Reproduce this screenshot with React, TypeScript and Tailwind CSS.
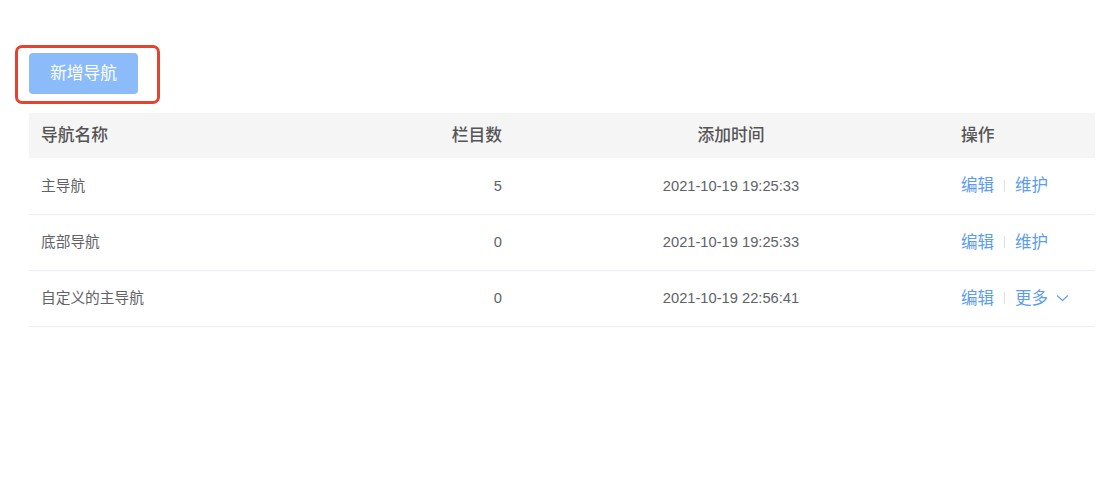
const rows = [
  { name: "主导航", count: 5, time: "2021-10-19 19:25:33", more: false },
  { name: "底部导航", count: 0, time: "2021-10-19 19:25:33", more: false },
  { name: "自定义的主导航", count: 0, time: "2021-10-19 22:56:41", more: true },
];

export default function App() {
  return (
    <div
      className="min-h-[501px] w-[1120px] bg-white"
      style={{ fontFamily: '"Liberation Sans", "Noto Sans CJK SC", sans-serif' }}
    >
      <div className="pt-[45px]">
        <div className="ml-[15px] inline-flex rounded-[7px] border-[3px] border-[#e5432f] pb-[7px] pl-[11px] pr-[19px] pt-[5px]">
          <button className="flex h-[41px] w-[109px] items-center justify-center rounded-[4px] bg-[#8bbbf9] pt-px text-[16.8px] text-white">
            新增导航
          </button>
        </div>
      </div>

      <div className="ml-[29px] mt-[9px] w-[1066px]">
        <table className="w-full table-fixed border-collapse">
          <colgroup>
            <col className="w-[300px]" />
            <col className="w-[185px]" />
            <col className="w-[434px]" />
            <col className="w-[147px]" />
          </colgroup>
          <thead>
            <tr className="h-[45px] bg-[#f5f5f5] text-[16.8px] text-[#555]">
              <th className="px-3 text-left font-medium">导航名称</th>
              <th className="px-3 text-right font-medium">栏目数</th>
              <th className="px-3 text-center font-medium">添加时间</th>
              <th className="px-[13px] text-left font-medium">操作</th>
            </tr>
          </thead>
          <tbody>
            {rows.map((row) => (
              <tr key={row.name} className="h-[56px] border-b border-[#ebeef5] text-[14.7px] text-[#606266]">
                <td className="px-3">{row.name}</td>
                <td className="px-3 text-right">{row.count}</td>
                <td className="px-3 text-center">{row.time}</td>
                <td className="px-[13px]">
                  <div className="flex items-center text-[16.5px] text-[#5b9cf1]">
                    <span>编辑</span>
                    <span className="mx-[10px] h-[12px] w-px bg-[#dcdfe6]" />
                    <span>{row.more ? "更多" : "维护"}</span>
                    {row.more && (
                      <svg className="ml-[8px]" width="13" height="8" viewBox="0 0 13 8" fill="none">
                        <path d="M1 1.5 L6.5 6.5 L12 1.5" stroke="currentColor" strokeWidth="1.1" />
                      </svg>
                    )}
                  </div>
                </td>
              </tr>
            ))}
          </tbody>
        </table>
      </div>
    </div>
  );
}
